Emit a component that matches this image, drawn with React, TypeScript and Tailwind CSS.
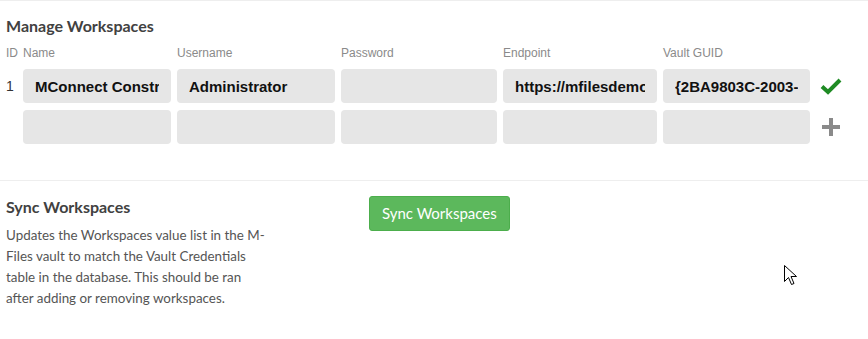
import React from 'react';

const lato = { fontFamily: 'Lato, "Open Sans", sans-serif' };

const columns = ['Name', 'Username', 'Password', 'Endpoint', 'Vault GUID'];

const rows: { id: string; values: string[]; action: 'check' | 'add' }[] = [
    { id: '1', values: ['MConnect Construction', 'Administrator', '', 'https://mfilesdemo.com', '{2BA9803C-2003-4A4B-9C1E}'], action: 'check' },
    { id: '', values: ['', '', '', '', ''], action: 'add' },
];

function CheckIcon() {
    return (
        <svg width="22" height="18" viewBox="0 0 22 18">
            <path d="M2 9.5 L8 15 L20 3" fill="none" stroke="#1f8b24" strokeWidth="4" strokeLinecap="butt" strokeLinejoin="miter" />
        </svg>
    );
}

function PlusIcon() {
    return (
        <svg width="18" height="18" viewBox="0 0 18 18">
            <rect x="7" y="0" width="4" height="18" fill="#8a8a8a" />
            <rect x="0" y="7" width="18" height="4" fill="#8a8a8a" />
        </svg>
    );
}

function Cursor() {
    return (
        <svg className="absolute left-[784px] top-[265px]" width="13" height="21" viewBox="0 0 13 21">
            <path d="M0.5 0.5 L0.5 16.5 L4.5 12.5 L7.5 19.5 L10 18.5 L7 11.5 L12.5 11.5 Z" fill="#fff" stroke="#000" strokeWidth="1" strokeLinejoin="miter" />
        </svg>
    );
}

export default function App() {
    return (
        <div className="relative w-[868px] h-[339px] bg-white overflow-hidden" style={{ fontFamily: '"Liberation Sans", Arial, sans-serif' }}>
            <div className="border-t border-[#eeeeee] pt-[15px] pb-[36px] px-[6px] border-b">
                <h2 className="text-[16px] leading-[20px] font-bold text-[#414141]" style={lato}>Manage Workspaces</h2>

                <div className="grid grid-cols-[11px_148px_158px_156px_154px_147px_30px] gap-x-[6px] mt-[9px]">
                    <div className="text-[12px] leading-[16px] text-[#8a8a8a] whitespace-nowrap">ID</div>
                    {columns.map((c) => (
                        <div key={c} className="text-[12px] leading-[16px] text-[#8a8a8a]">{c}</div>
                    ))}
                </div>

                <div className="flex flex-col gap-[7px] mt-[8px]">
                    {rows.map((row, i) => (
                        <div key={i} className="grid grid-cols-[11px_148px_158px_156px_154px_147px_30px] gap-x-[6px] items-center">
                            <div className="text-[14px] text-[#333]">{row.id}</div>
                            {row.values.map((v, j) => (
                                <input
                                    key={j}
                                    readOnly
                                    value={v}
                                    className="w-full h-[34px] rounded-[4px] bg-[#e6e6e6] px-[12px] text-[15px] font-bold text-[#111] outline-none"
                                    style={{ fontFamily: '"Liberation Sans", Arial, sans-serif' }}
                                />
                            ))}
                            <div className="flex justify-center">
                                {row.action === 'check' ? <CheckIcon /> : <PlusIcon />}
                            </div>
                        </div>
                    ))}
                </div>
            </div>

            <div className="flex px-[6px] pt-[16px]">
                <div className="w-[363px]">
                    <h3 className="text-[16px] leading-[20px] font-bold text-[#414141]" style={lato}>Sync Workspaces</h3>
                    <p className="mt-[8px] w-[262px] text-[13.4px] leading-[21px] text-[#555555]" style={lato}>
                        Updates the Workspaces value list in the M-Files vault to match the Vault Credentials table in the database. This should be ran after adding or removing workspaces.
                    </p>
                </div>
                <div>
                    <button className="-mt-[1px] h-[35px] px-[12px] rounded-[3px] bg-[#5cb85c] border border-[#4cae4c] text-white text-[15px]" style={lato}>
                        Sync Workspaces
                    </button>
                </div>
            </div>

            <Cursor />
        </div>
    );
}
